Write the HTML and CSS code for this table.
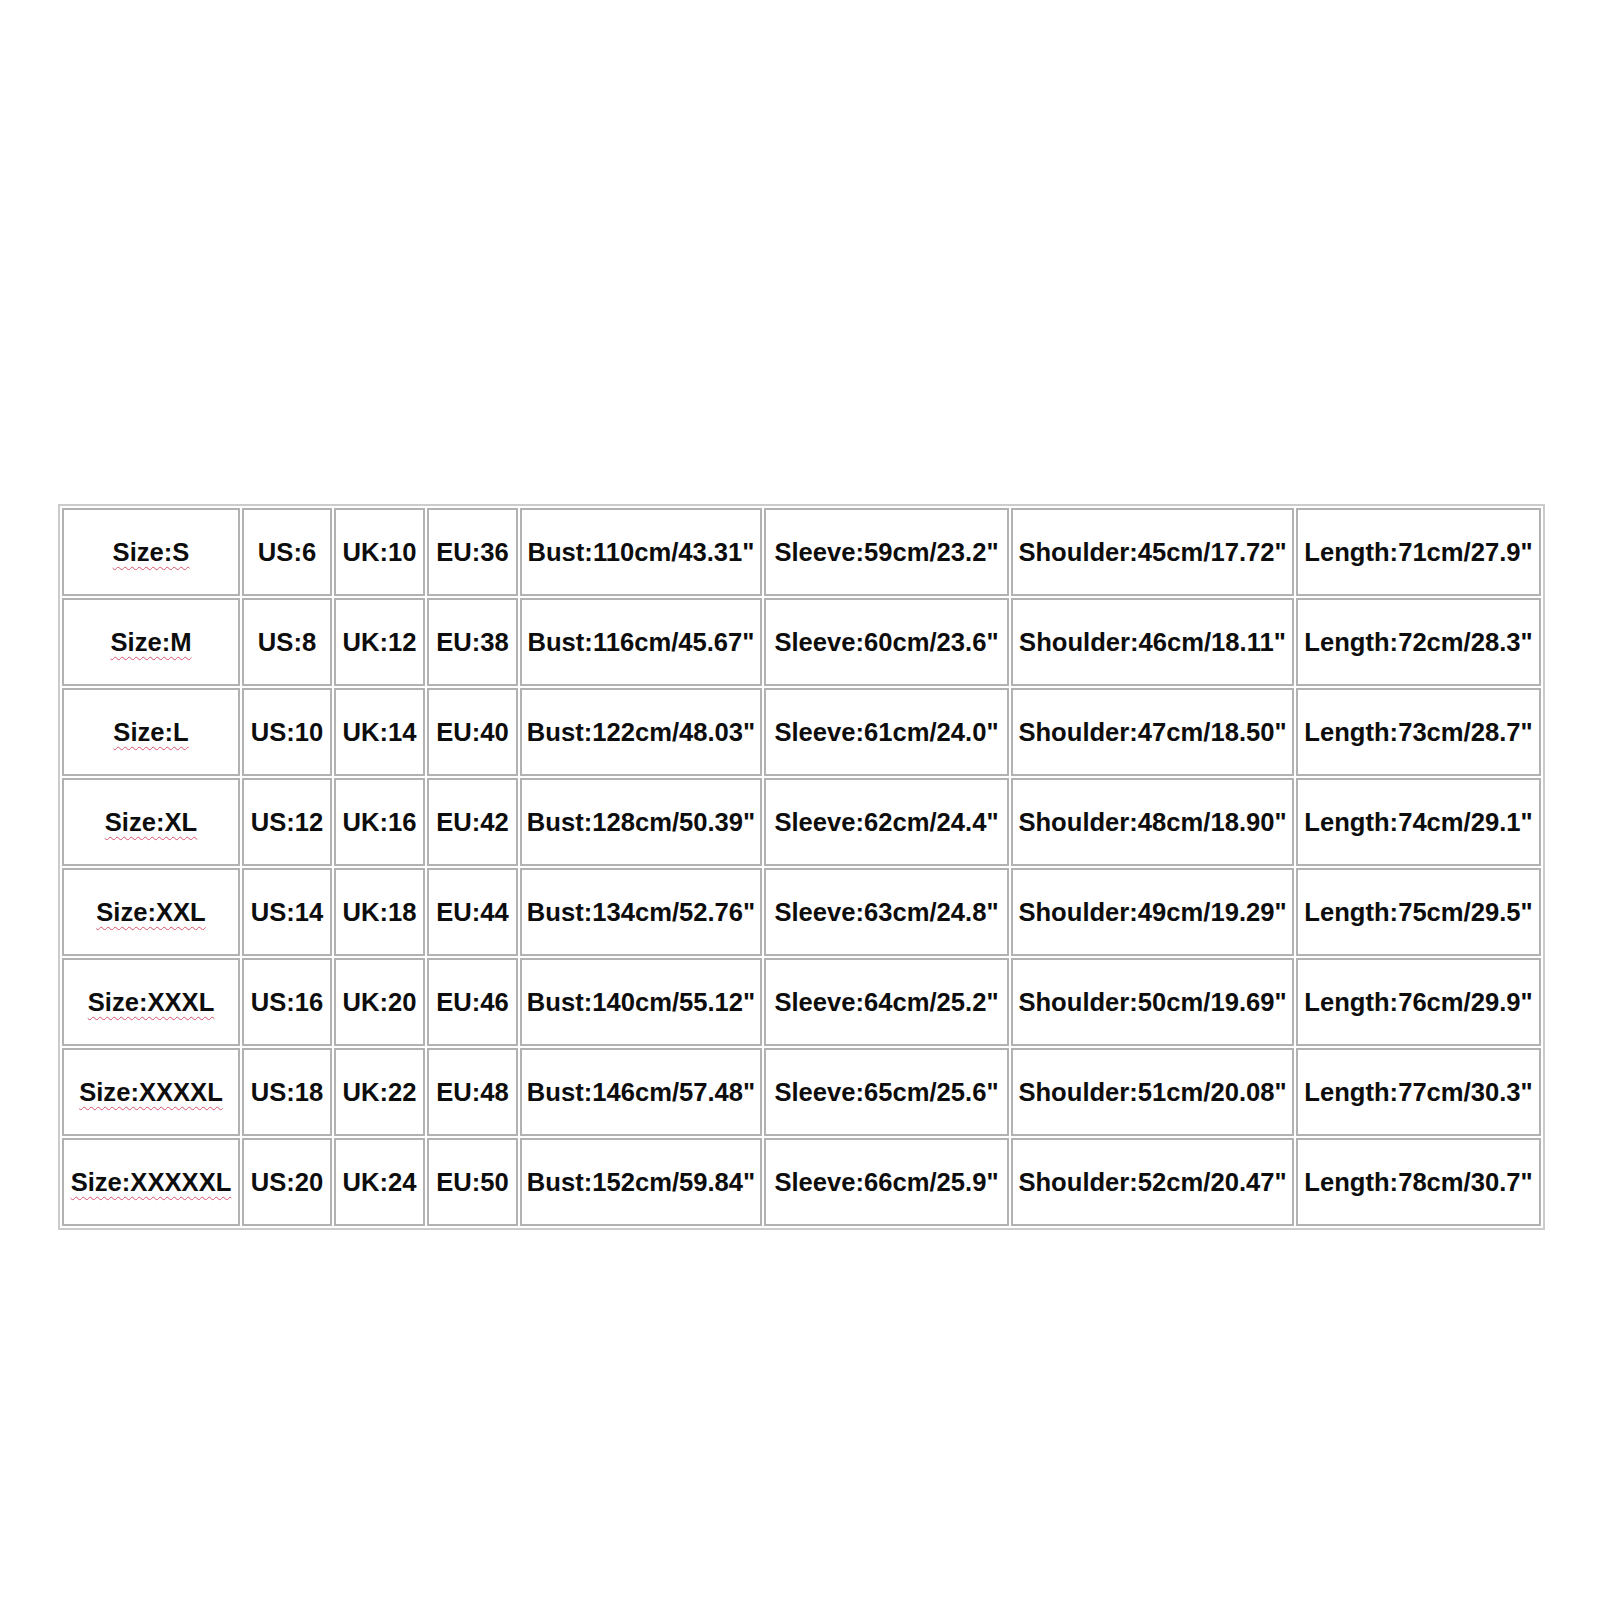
FILE: index.html
```html
<!DOCTYPE html>
<html>
<head>
<meta charset="utf-8">
<link rel="stylesheet" href="styles.css">
</head>
<body>
<div class="page">
  <div class="chart">
    <div class="cell"><span class="size">Size:S</span></div><div class="cell">US:6</div><div class="cell">UK:10</div><div class="cell">EU:36</div><div class="cell">Bust:110cm/43.31"</div><div class="cell">Sleeve:59cm/23.2"</div><div class="cell">Shoulder:45cm/17.72"</div><div class="cell">Length:71cm/27.9"</div>
    <div class="cell"><span class="size">Size:M</span></div><div class="cell">US:8</div><div class="cell">UK:12</div><div class="cell">EU:38</div><div class="cell">Bust:116cm/45.67"</div><div class="cell">Sleeve:60cm/23.6"</div><div class="cell">Shoulder:46cm/18.11"</div><div class="cell">Length:72cm/28.3"</div>
    <div class="cell"><span class="size">Size:L</span></div><div class="cell">US:10</div><div class="cell">UK:14</div><div class="cell">EU:40</div><div class="cell">Bust:122cm/48.03"</div><div class="cell">Sleeve:61cm/24.0"</div><div class="cell">Shoulder:47cm/18.50"</div><div class="cell">Length:73cm/28.7"</div>
    <div class="cell"><span class="size">Size:XL</span></div><div class="cell">US:12</div><div class="cell">UK:16</div><div class="cell">EU:42</div><div class="cell">Bust:128cm/50.39"</div><div class="cell">Sleeve:62cm/24.4"</div><div class="cell">Shoulder:48cm/18.90"</div><div class="cell">Length:74cm/29.1"</div>
    <div class="cell"><span class="size">Size:XXL</span></div><div class="cell">US:14</div><div class="cell">UK:18</div><div class="cell">EU:44</div><div class="cell">Bust:134cm/52.76"</div><div class="cell">Sleeve:63cm/24.8"</div><div class="cell">Shoulder:49cm/19.29"</div><div class="cell">Length:75cm/29.5"</div>
    <div class="cell"><span class="size">Size:XXXL</span></div><div class="cell">US:16</div><div class="cell">UK:20</div><div class="cell">EU:46</div><div class="cell">Bust:140cm/55.12"</div><div class="cell">Sleeve:64cm/25.2"</div><div class="cell">Shoulder:50cm/19.69"</div><div class="cell">Length:76cm/29.9"</div>
    <div class="cell"><span class="size">Size:XXXXL</span></div><div class="cell">US:18</div><div class="cell">UK:22</div><div class="cell">EU:48</div><div class="cell">Bust:146cm/57.48"</div><div class="cell">Sleeve:65cm/25.6"</div><div class="cell">Shoulder:51cm/20.08"</div><div class="cell">Length:77cm/30.3"</div>
    <div class="cell"><span class="size">Size:XXXXXL</span></div><div class="cell">US:20</div><div class="cell">UK:24</div><div class="cell">EU:50</div><div class="cell">Bust:152cm/59.84"</div><div class="cell">Sleeve:66cm/25.9"</div><div class="cell">Shoulder:52cm/20.47"</div><div class="cell">Length:78cm/30.7"</div>
  </div>
</div>
</body>
</html>
```
FILE: styles.css
```css
html, body {
  margin: 0;
  padding: 0;
  background: #ffffff;
}
.page {
  width: 1600px;
  height: 1600px;
  box-sizing: border-box;
  padding-top: 504px;
  padding-left: 58px;
}
.chart {
  display: inline-grid;
  grid-template-columns: 178px 90px 91px 91px 242px 245px 283px 245px;
  grid-auto-rows: 88px;
  gap: 2px;
  padding: 2px;
  border: 2px solid #cbcbcb;
  font-family: "Liberation Sans", Arial, sans-serif;
  font-weight: bold;
  font-size: 25.6px;
  color: #0d0d0d;
}
.cell {
  box-sizing: border-box;
  border: 2px solid #b2b2b2;
  display: flex;
  align-items: center;
  justify-content: center;
  white-space: nowrap;
}
.size {
  text-decoration: underline wavy #d9536a;
  text-decoration-thickness: 1px;
  text-underline-offset: 5px;
}
```
